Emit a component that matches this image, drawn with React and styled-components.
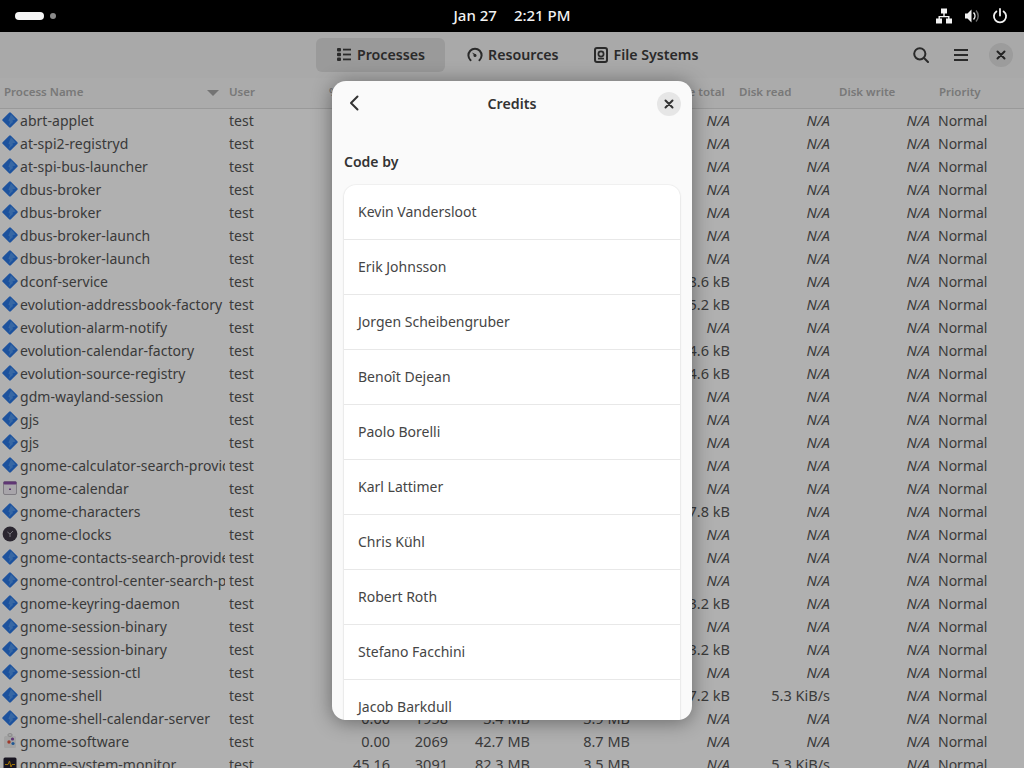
import React from 'react';
import styled, { createGlobalStyle } from 'styled-components';

const GlobalStyle = createGlobalStyle`
  html, body {
    margin: 0;
    padding: 0;
    background: #000;
  }
  * {
    box-sizing: border-box;
  }
`;

const COLUMNS = '225px 100px 70px 58px 82px 100px 100px 100px 100px 1fr';

const Screen = styled.div`
  position: relative;
  width: 1024px;
  height: 768px;
  overflow: hidden;
  display: flex;
  flex-direction: column;
  font-family: 'Noto Sans', sans-serif;
`;

const TopBar = styled.div`
  height: 32px;
  flex: none;
  background: #000;
  color: #f2f2f2;
  display: grid;
  grid-template-columns: 1fr auto 1fr;
  align-items: center;
  padding: 0 15px;
  font-size: 15px;
  font-weight: 500;
`;

const Workspaces = styled.div`
  display: flex;
  align-items: center;
  gap: 6px;
`;

const WorkspacePill = styled.span`
  width: 29px;
  height: 8px;
  border-radius: 4px;
  background: #f6f6f6;
`;

const WorkspaceDot = styled.span`
  width: 6px;
  height: 6px;
  border-radius: 50%;
  background: #8a8a8a;
`;

const Clock = styled.div`
  display: flex;
  gap: 17px;
  margin-bottom: 2px;
`;

const Tray = styled.div`
  display: flex;
  justify-content: flex-end;
  align-items: center;
  gap: 12px;
  padding-right: 1px;
`;

const Window = styled.div`
  position: relative;
  flex: 1;
  min-height: 0;
  background: #fff;
  display: flex;
  flex-direction: column;
`;

const HeaderBar = styled.div`
  height: 46px;
  flex: none;
  background: #f5f5f5;
  display: flex;
  align-items: center;
  padding: 0 11px 0 316px;
`;

const Tabs = styled.div`
  display: flex;
  align-items: center;
  gap: 8px;
  flex: 1;
`;

const Tab = styled.div`
  height: 34px;
  padding: ${(p) => (p.$active ? '0 20px' : '0 13px')};
  margin-right: ${(p) => (p.$active ? '1px' : '0')};
  border-radius: 6px;
  display: flex;
  align-items: center;
  gap: 5px;
  font-size: 14.2px;
  font-weight: 600;
  color: #3d3d3d;
  background: ${(p) => (p.$active ? '#e0e0e0' : 'transparent')};
`;

const TabLabel = styled.span`
  margin-bottom: 2px;
`;

const HeaderActions = styled.div`
  display: flex;
  align-items: center;
  gap: 24px;
`;

const WindowClose = styled.div`
  width: 24px;
  height: 24px;
  margin-left: -4px;
  border-radius: 50%;
  background: #e2e2e2;
  display: flex;
  align-items: center;
  justify-content: center;
`;

const TableHead = styled.div`
  height: 31px;
  flex: none;
  display: grid;
  grid-template-columns: ${COLUMNS};
  align-items: center;
  padding-bottom: 3px;
  background: #f8f8f8;
  border-bottom: 1px solid #dedede;
  font-size: 11.5px;
  font-weight: 600;
  color: #aeaeae;
`;

const HeadCell = styled.div`
  position: relative;
  padding-left: 4px;
  white-space: nowrap;
`;

const SortArrow = styled.span`
  position: absolute;
  right: 6px;
  top: 6px;
  width: 0;
  height: 0;
  border-left: 6px solid transparent;
  border-right: 6px solid transparent;
  border-top: 6px solid #a8a8a8;
`;

const TableBody = styled.div`
  display: flex;
  flex-direction: column;
`;

const Row = styled.div`
  height: 23px;
  flex: none;
  display: grid;
  grid-template-columns: ${COLUMNS};
  align-items: center;
  padding-bottom: 1px;
  font-size: 14px;
  color: #555;
`;

const NameCell = styled.div`
  display: flex;
  align-items: center;
  gap: 2px;
  padding-left: 2px;
  padding-right: 2px;
  overflow: hidden;
  white-space: nowrap;
  letter-spacing: 0.04px;
`;

const IconSlot = styled.span`
  width: 16px;
  height: 16px;
  flex: none;
  display: flex;
`;

const UserCell = styled.div`
  padding-left: 4px;
`;

const NumCell = styled.div`
  text-align: right;
  padding-right: 5px;
  white-space: nowrap;
  font-size: 14.5px;
  font-style: ${(p) => (p.$na ? 'italic' : 'normal')};
`;

const PriorityCell = styled.div`
  padding-left: 3px;
`;

const Dim = styled.div`
  position: absolute;
  inset: 0;
  background: rgba(0, 0, 0, 0.31);
`;

const Dialog = styled.div`
  position: absolute;
  left: 332px;
  top: 49px;
  width: 360px;
  height: 639px;
  background: #fafafa;
  border-radius: 14px;
  overflow: hidden;
  box-shadow: 0 2px 20px rgba(0, 0, 0, 0.42);
  display: flex;
  flex-direction: column;
`;

const DialogHeader = styled.div`
  height: 46px;
  flex: none;
  display: grid;
  grid-template-columns: 1fr auto 1fr;
  align-items: center;
  padding: 0 12px 2px;
  font-size: 14.2px;
  font-weight: 600;
  color: #333;
`;

const BackSlot = styled.div`
  display: flex;
  padding-left: 3px;
`;

const DialogClose = styled.div`
  justify-self: end;
  width: 24px;
  height: 24px;
  margin: 2px -1px 0 0;
  border-radius: 50%;
  background: #e6e6e6;
  display: flex;
  align-items: center;
  justify-content: center;
`;

const DialogBody = styled.div`
  padding: 25px 12px 0;
`;

const SectionTitle = styled.div`
  font-size: 14px;
  font-weight: 600;
  line-height: 20px;
  color: #333;
  margin-bottom: 13px;
`;

const CreditList = styled.div`
  background: #fff;
  border-radius: 12px;
  box-shadow: 0 0 0 1px rgba(0, 0, 0, 0.03), 0 1px 3px rgba(0, 0, 0, 0.08);
`;

const CreditRow = styled.div`
  height: 55px;
  padding: 0 14px 2px;
  display: flex;
  align-items: center;
  font-size: 14px;
  color: #454545;
  border-bottom: 1px solid #e8e8e8;
`;

// icons

const ExecIcon = () => (
  <svg width="16" height="16" viewBox="0 0 16 16">
    <rect x="2.2" y="2.2" width="11.6" height="11.6" rx="1.2" fill="#2a78e4" transform="rotate(45 8 8)" />
    <path d="M9 2.2 13.6 7.4 10.4 8.4 11 10 6.6 14 8 9.8 6.4 8.8Z" fill="#62a4f2" opacity="0.7" />
  </svg>
);

const CalendarIcon = () => (
  <svg width="16" height="16" viewBox="0 0 16 16">
    <rect x="1.5" y="1.5" width="13" height="13" rx="1.5" fill="#f4f0f6" stroke="#b9b4bd" />
    <rect x="1.5" y="1.5" width="13" height="3" rx="1" fill="#8a4fa8" />
    <rect x="7" y="8.5" width="2" height="1.5" fill="#8a4fa8" />
  </svg>
);

const ClockIcon = () => (
  <svg width="16" height="16" viewBox="0 0 16 16">
    <circle cx="8" cy="8" r="7.4" fill="#3d3846" />
    <path d="M8 8 8 11M8 8 11 5M8 8 5.4 6" stroke="#b8b4c0" strokeWidth="0.9" fill="none" />
  </svg>
);

const SoftwareIcon = () => (
  <svg width="16" height="16" viewBox="0 0 16 16">
    <rect x="2" y="3" width="12" height="12" rx="1.5" fill="#ececec" />
    <rect x="6" y="0.8" width="4" height="2.4" rx="1" fill="none" stroke="#bdbdbd" />
    <circle cx="10.5" cy="6" r="1.6" fill="#8a4fa8" />
    <circle cx="7" cy="9" r="1.7" fill="#e5533d" />
    <circle cx="11" cy="10.5" r="1.6" fill="#2f7fd6" />
  </svg>
);

const MonitorIcon = () => (
  <svg width="16" height="16" viewBox="0 0 16 16">
    <rect x="1.5" y="1.5" width="13" height="13" rx="1.5" fill="#241f31" />
    <path d="M3 8.5 6 8.5 7.5 5 9 11 10 8.5 13 8.5" stroke="#e5a50a" strokeWidth="1" fill="none" />
  </svg>
);

const processIcons = {
  exec: <ExecIcon />,
  calendar: <CalendarIcon />,
  clock: <ClockIcon />,
  software: <SoftwareIcon />,
  monitor: <MonitorIcon />,
};

const NetworkIcon = () => (
  <svg width="16" height="16" viewBox="0 0 16 16" fill="#f2f2f2">
    <rect x="5" y="0.5" width="6" height="5" />
    <rect x="0" y="10.5" width="6" height="5" />
    <rect x="10" y="10.5" width="6" height="5" />
    <path d="M7.3 5h1.4v3h4.8v3h-1.4V9.3H3.9V11H2.5V8h4.8Z" />
  </svg>
);

const VolumeIcon = () => (
  <svg width="16" height="16" viewBox="0 0 16 16">
    <path d="M1 5.5h2.5L7.5 1.5v13L3.5 10.5H1Z" fill="#f2f2f2" />
    <path d="M9.5 4.5a5 5 0 0 1 0 7" stroke="#f2f2f2" strokeWidth="1.5" fill="none" />
    <path d="M12 2.5a8 8 0 0 1 0 11" stroke="#6e6e6e" strokeWidth="1.5" fill="none" />
  </svg>
);

const PowerIcon = () => (
  <svg width="16" height="16" viewBox="0 0 16 16" fill="none" stroke="#f2f2f2" strokeWidth="1.8" strokeLinecap="round">
    <path d="M8 1v6.5" />
    <path d="M4.4 3.4a6.1 6.1 0 1 0 7.2 0" />
  </svg>
);

const ListIcon = () => (
  <svg width="16" height="16" viewBox="0 0 16 16" fill="#3d3d3d">
    <rect x="1" y="1" width="4" height="3.4" rx="1" />
    <rect x="1" y="5.8" width="4" height="3.4" rx="1" />
    <rect x="1" y="10.6" width="4" height="3.4" rx="1" />
    <rect x="7" y="1.7" width="8" height="1.8" />
    <rect x="7" y="6.6" width="8" height="1.8" />
    <rect x="7" y="11.5" width="8" height="1.8" />
  </svg>
);

const GaugeIcon = () => (
  <svg width="16" height="16" viewBox="0 0 16 16" fill="none">
    <path d="M3.6 13.2A6.6 6.6 0 1 1 12.4 13.2" stroke="#3d3d3d" strokeWidth="2" strokeLinecap="round" />
    <path d="M5 5.5 9.2 7.6 8 9.6Z" fill="#3d3d3d" />
    <circle cx="8" cy="8.6" r="1.5" fill="#3d3d3d" />
  </svg>
);

const DiskIcon = () => (
  <svg width="16" height="16" viewBox="0 0 16 16" fill="none" stroke="#3d3d3d">
    <rect x="2" y="1" width="12" height="14" rx="2" strokeWidth="2" />
    <circle cx="8" cy="7" r="2.6" strokeWidth="1.7" />
    <path d="M5 11.6h6" strokeWidth="1.6" />
  </svg>
);

const SearchIcon = () => (
  <svg width="16" height="16" viewBox="0 0 16 16" fill="none" stroke="#3d3d3d" strokeWidth="2" strokeLinecap="round">
    <circle cx="6.8" cy="6.8" r="5.6" />
    <path d="M11 11l4 4" />
  </svg>
);

const MenuIcon = () => (
  <svg width="16" height="16" viewBox="0 0 16 16" fill="#3d3d3d">
    <rect x="1" y="2" width="14" height="2" />
    <rect x="1" y="7" width="14" height="2" />
    <rect x="1" y="12" width="14" height="2" />
  </svg>
);

const CloseIcon = () => (
  <svg width="10" height="10" viewBox="0 0 10 10" fill="none" stroke="#333" strokeWidth="2" strokeLinecap="round">
    <path d="M1.5 1.5l7 7M8.5 1.5l-7 7" />
  </svg>
);

const BackIcon = () => (
  <svg width="14" height="16" viewBox="0 0 14 16" fill="none" stroke="#333" strokeWidth="2" strokeLinecap="round" strokeLinejoin="round">
    <path d="M10.5 1.5 4 8l6.5 6.5" />
  </svg>
);

// data

const columns = ['Process Name', 'User', '% CPU', 'ID', 'Memory', 'Shared', 'Disk write total', 'Disk read', 'Disk write', 'Priority'];

const processes = [
  { name: 'abrt-applet' },
  { name: 'at-spi2-registryd' },
  { name: 'at-spi-bus-launcher' },
  { name: 'dbus-broker' },
  { name: 'dbus-broker' },
  { name: 'dbus-broker-launch' },
  { name: 'dbus-broker-launch' },
  { name: 'dconf-service', total: '8.6 kB' },
  { name: 'evolution-addressbook-factory', total: '5.2 kB' },
  { name: 'evolution-alarm-notify' },
  { name: 'evolution-calendar-factory', total: '4.6 kB' },
  { name: 'evolution-source-registry', total: '4.6 kB' },
  { name: 'gdm-wayland-session' },
  { name: 'gjs' },
  { name: 'gjs' },
  { name: 'gnome-calculator-search-provider' },
  { name: 'gnome-calendar', icon: 'calendar' },
  { name: 'gnome-characters', total: '7.8 kB' },
  { name: 'gnome-clocks', icon: 'clock' },
  { name: 'gnome-contacts-search-provider' },
  { name: 'gnome-control-center-search-provider' },
  { name: 'gnome-keyring-daemon', total: '3.2 kB' },
  { name: 'gnome-session-binary' },
  { name: 'gnome-session-binary', total: '3.2 kB' },
  { name: 'gnome-session-ctl' },
  { name: 'gnome-shell', total: '7.2 kB', read: '5.3 KiB/s' },
  { name: 'gnome-shell-calendar-server', cpu: '0.00', id: '1958', mem: '3.4 MB', shared: '3.9 MB' },
  { name: 'gnome-software', icon: 'software', cpu: '0.00', id: '2069', mem: '42.7 MB', shared: '8.7 MB' },
  { name: 'gnome-system-monitor', icon: 'monitor', cpu: '45.16', id: '3091', mem: '82.3 MB', shared: '3.5 MB', read: '5.3 KiB/s' },
];

const credits = [
  'Kevin Vandersloot',
  'Erik Johnsson',
  'Jorgen Scheibengruber',
  'Benoît Dejean',
  'Paolo Borelli',
  'Karl Lattimer',
  'Chris Kühl',
  'Robert Roth',
  'Stefano Facchini',
  'Jacob Barkdull',
];

const Stat = ({ value }) => <NumCell $na={!value}>{value || 'N/A'}</NumCell>;

export default function App() {
  return (
    <Screen>
      <GlobalStyle />
      <TopBar>
        <Workspaces>
          <WorkspacePill />
          <WorkspaceDot />
        </Workspaces>
        <Clock>
          <span>Jan 27</span>
          <span>2:21 PM</span>
        </Clock>
        <Tray>
          <NetworkIcon />
          <VolumeIcon />
          <PowerIcon />
        </Tray>
      </TopBar>
      <Window>
        <HeaderBar>
          <Tabs>
            <Tab $active><ListIcon /><TabLabel>Processes</TabLabel></Tab>
            <Tab><GaugeIcon /><TabLabel>Resources</TabLabel></Tab>
            <Tab><DiskIcon /><TabLabel>File Systems</TabLabel></Tab>
          </Tabs>
          <HeaderActions>
            <SearchIcon />
            <MenuIcon />
            <WindowClose><CloseIcon /></WindowClose>
          </HeaderActions>
        </HeaderBar>
        <TableHead>
          {columns.map((col, i) => (
            <HeadCell key={col}>
              {col}
              {i === 0 && <SortArrow />}
            </HeadCell>
          ))}
        </TableHead>
        <TableBody>
          {processes.map((p, i) => (
            <Row key={i}>
              <NameCell>
                <IconSlot>{processIcons[p.icon || 'exec']}</IconSlot>
                {p.name}
              </NameCell>
              <UserCell>test</UserCell>
              <NumCell>{p.cpu || '0.00'}</NumCell>
              <NumCell>{p.id || ''}</NumCell>
              <NumCell>{p.mem || ''}</NumCell>
              <NumCell>{p.shared || ''}</NumCell>
              <Stat value={p.total} />
              <Stat value={p.read} />
              <Stat />
              <PriorityCell>Normal</PriorityCell>
            </Row>
          ))}
        </TableBody>
        <Dim />
        <Dialog>
          <DialogHeader>
            <BackSlot><BackIcon /></BackSlot>
            <span>Credits</span>
            <DialogClose><CloseIcon /></DialogClose>
          </DialogHeader>
          <DialogBody>
            <SectionTitle>Code by</SectionTitle>
            <CreditList>
              {credits.map((name) => (
                <CreditRow key={name}>{name}</CreditRow>
              ))}
            </CreditList>
          </DialogBody>
        </Dialog>
      </Window>
    </Screen>
  );
}
